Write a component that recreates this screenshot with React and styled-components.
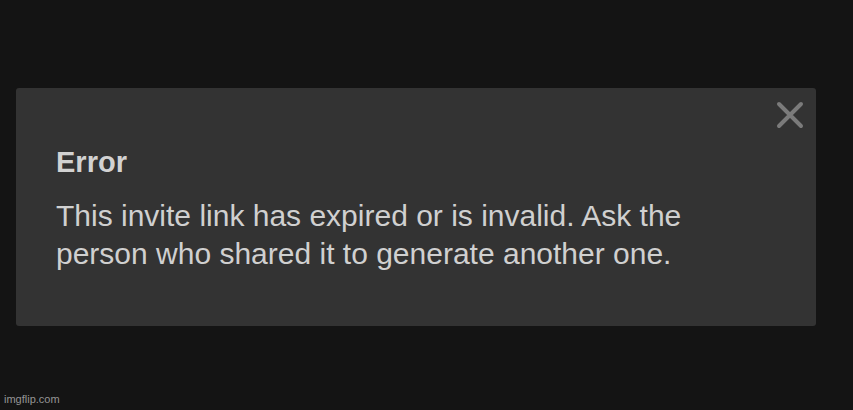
import React from 'react';
import styled, { createGlobalStyle } from 'styled-components';

const GlobalStyle = createGlobalStyle`
  html, body {
    margin: 0;
    padding: 0;
    background: #141414;
  }
  body {
    font-family: 'Liberation Sans', Arial, sans-serif;
  }
`;

const Page = styled.div`
  position: relative;
  width: 853px;
  height: 410px;
  box-sizing: border-box;
  padding: 88px 37px 0 16px;
  background: #141414;
`;

const Dialog = styled.div`
  position: relative;
  box-sizing: border-box;
  height: 238px;
  padding: 58px 40px 0 40px;
  background: #333333;
  border-radius: 3px;
  display: flex;
  flex-direction: column;
  gap: 19px;
`;

const Title = styled.h2`
  margin: 0;
  font-size: 29px;
  line-height: 32px;
  font-weight: 700;
  color: #d2d2d2;
`;

const Message = styled.p`
  margin: 0;
  max-width: 660px;
  font-size: 30px;
  line-height: 38px;
  font-weight: 400;
  color: #d0d0d0;
`;

const CloseButton = styled.button`
  position: absolute;
  top: 13px;
  right: 12px;
  width: 28px;
  height: 28px;
  padding: 0;
  border: none;
  background: transparent;
  display: flex;
  align-items: center;
  justify-content: center;
  cursor: pointer;
`;

const Watermark = styled.span`
  position: absolute;
  left: 4px;
  bottom: 5px;
  font-size: 11px;
  color: #959595;
`;

const CloseIcon = () => (
  <svg width="28" height="28" viewBox="0 0 28 28">
    <path
      d="M3 3 L25 25 M25 3 L3 25"
      stroke="#7b7b7b"
      strokeWidth="4"
      strokeLinecap="round"
      fill="none"
    />
  </svg>
);

const App = () => (
  <>
    <GlobalStyle />
    <Page>
      <Dialog>
        <CloseButton aria-label="Close">
          <CloseIcon />
        </CloseButton>
        <Title>Error</Title>
        <Message>
          This invite link has expired or is invalid. Ask the person who shared it to generate another one.
        </Message>
      </Dialog>
      <Watermark>imgflip.com</Watermark>
    </Page>
  </>
);

export default App;
